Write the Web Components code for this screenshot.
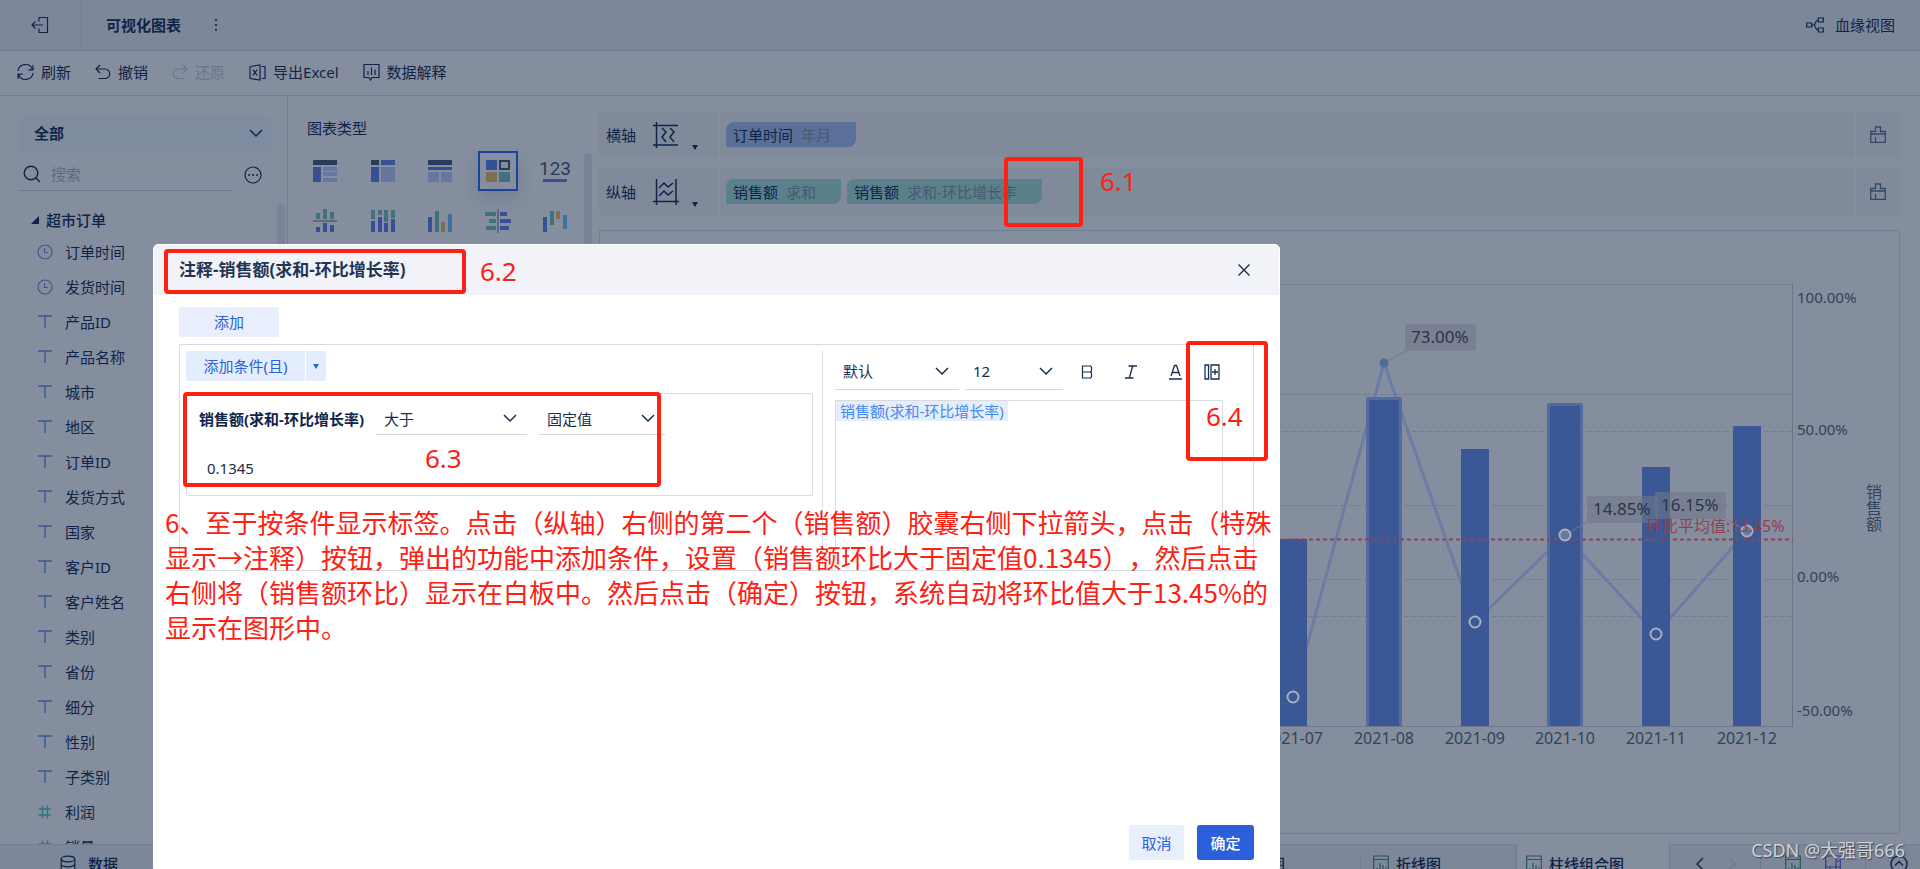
<!DOCTYPE html>
<html lang="zh-CN">
<head>
<meta charset="utf-8">
<title>可视化图表</title>
<style>
  :root {
    --page: #858e9e; --bar: #7d879a; --line: #747e91; --row: #808a9b;
    --ink: #0f2448; --muted: #5d6880; --blue: #374f94; --red: #fe2012;
    --sheet-line: #d9dbe3; --accent: #2b60da; --accent-soft: #e8eefb;
  }
  body {
    margin: 0; height: 100vh; overflow: hidden; background: var(--page); color: var(--ink);
    font: 15px/20px "Noto Sans", "Noto Sans CJK SC", sans-serif;
  }
</style>
</head>
<body>
<chart-workbench></chart-workbench>

<script>
const ICONS = {
  exit: [18, 18, '<path d="M8 5.500V1.500h8.500v15H8v-4M1 9h11M4.500 5.500L1 9l3.500 3.500"/>'],
  dots: [4, 14, '<g fill="currentColor" stroke="none"><circle cx="2" cy="2" r="1.100"/><circle cx="2" cy="7" r="1.100"/><circle cx="2" cy="12" r="1.100"/></g>'],
  lineage: [18, 16, '<path d="M.7 6h5v4h-5zM12.300 1h5v4h-5zM12.300 11h5v4h-5zM5.700 8h3M12.300 3C10 3 10 5 9 6.500S8.500 9 9.500 10.500 10.500 13 12.300 13"/>'],
  refresh: [17, 18, '<path d="M1 8A7.500 7.500 0 0 1 15.500 6.500M16 10A7.500 7.500 0 0 1 1.500 11.500M16 2v4.800h-4.600M1 16v-4.800h4.600"/>'],
  undo: [16, 16, '<path d="M5 1L1 5l4 4M1 5h9a4.700 4.700 0 0 1 0 9.500H3.500"/>'],
  redo: [16, 16, '<path d="M11 1l4 4-4 4M15 5H6a4.700 4.700 0 0 0 0 9.500h6.500"/>'],
  excel: [17, 17, '<path d="M1 2.500L11 1v15L1 14.500zM12.500 2.500H16v12h-3.500M3.800 5.500l4.400 6M8.200 5.500l-4.400 6"/>'],
  explain: [17, 18, '<path d="M1 1.500h15v13H9L7.500 17 6 14.500H1zM5 8v4M8.500 4.500V12M12 6.500V12"/>'],
  chevron: [14, 9, '<path d="M1 1l6 6 6-6"/>', 1.5],
  search: [18, 18, '<circle cx="8" cy="8" r="6.800"/><path d="M13 13l4 4"/>', 1.4],
  more: [18, 18, '<circle cx="9" cy="9" r="8"/><g fill="currentColor" stroke="none"><circle cx="5" cy="9" r="1"/><circle cx="9" cy="9" r="1"/><circle cx="13" cy="9" r="1"/></g>'],
  fold: [8, 8, '<path d="M8 0v8H0z" fill="currentColor" stroke="none"/>'],
  clock: [16, 16, '<circle cx="8" cy="8" r="7"/><path d="M7.500 4v4.500H11"/>'],
  text: [16, 16, '<path d="M1 2h14M8 2v12"/>', 1.4],
  number: [16, 16, '<path d="M2 5h12M1.500 11h12M5.500 1.500v13M10.500 1.500v13"/>', 1.4],
  database: [16, 18, '<ellipse cx="8" cy="4" rx="6.800" ry="2.800"/><path d="M1.200 4v10c0 3.700 13.600 3.700 13.600 0V4M1.200 9c0 3.700 13.600 3.700 13.600 0"/>'],
  xaxis: [26, 26, '<path d="M3.500 0v26M0 3.500h25M0 23h25M9 6l4 4-4 5 4 5M17 6l4 4-4 5 4 5"/>', 1.5],
  yaxis: [26, 26, '<path d="M3.500 0v26M23 0v26M0 22.500h26M6 9l5-5 4 4 5-4M6 17l5-5 4 4 5-4"/>', 1.5],
  caret: [6, 5, '<path d="M0 0h6L3 5z" fill="currentColor" stroke="none"/>'],
  brush: [16, 17, '<path d="M.7 5.500h4.800V1h5v4.500h4.800v10.800H.7zM.7 8h14.600M5.500 11v5"/>', 1.3],
  sheet: [16, 18, '<path d="M.7 1h14.600v16H.7zM.7 4.500h14.600M4 17v-4M7 17V8M10 17v-7M13 17v-5"/>', 1.2],
  board: [16, 18, '<path d="M.7 1h14.600v16H.7zM11 1v16M.7 12H15M5 12v5M11 6h4"/>', 1.2],
  left: [8, 14, '<path d="M7 1L1 7l6 6"/>', 1.4],
  right: [8, 14, '<path d="M1 1l6 6-6 6"/>', 1.4],
  up: [18, 18, '<circle cx="9" cy="9" r="8"/><path d="M5 10.500l4-4 4 4"/>', 1.4],
  close: [12, 12, '<path d="M.5.500l11 11M11.500.500l-11 11"/>', 1.4],
  bold: [12, 14, '<path d="M1.500 1h8L10.500 2v4L9.500 7H1.500zM1.500 7h8L10.500 8v4L9.500 13H1.500z"/>'],
  italic: [12, 14, '<path d="M3.500 1H12M0 13h8.500M7.700 1L4.300 13"/>', 1.3],
  color: [13, 16, '<path d="M2 12L5.500 1.500h2L11 12M3.200 8.500h6.600M0 15h13"/>', 1.3],
  insert: [16, 16, '<path d="M1 1h3.500v14H1zM7 1h8v14H7zM11 5v6M8 8h6"/>', 1.3]
};

function define(name, css, html, ready) {
  const template = document.createElement('template');
  template.innerHTML = `<style>:host{display:block;box-sizing:border-box}*,*::before{box-sizing:border-box}
    button,select,input{font:inherit;color:inherit;background:none;border:0;border-radius:0;margin:0;padding:0;outline:0;appearance:none}
    ul{list-style:none;margin:0;padding:0}a{color:inherit;text-decoration:none}${css}</style>${html}`;
  customElements.define(name, class extends HTMLElement {
    constructor() {
      super();
      this.attachShadow({ mode: 'open' }).append(template.content.cloneNode(true));
    }
    connectedCallback() { if (ready) ready(this, this.shadowRoot); }
  });
}

define('ui-icon', ':host{display:block;flex:none}svg{display:block}', '<svg fill="none" stroke="currentColor" aria-hidden="true"></svg>', (host, root) => {
  const [w, h, art, stroke = 1.2] = ICONS[host.getAttribute('name')];
  const svg = root.querySelector('svg');
  svg.setAttribute('width', w);
  svg.setAttribute('height', h);
  svg.setAttribute('stroke-width', stroke);
  svg.innerHTML = art;
});

define('ui-select', `
  :host{position:relative;display:flex;align-items:center;border-bottom:1px solid #d5d8df}
  select{width:100%;height:24px;padding-left:8px}
  ui-icon{position:absolute;right:10px;pointer-events:none}`,
  '<select><option></option></select><ui-icon name="chevron"></ui-icon>', (host, root) => {
    root.querySelector('select').setAttribute('aria-label', host.getAttribute('label'));
    root.querySelector('option').textContent = host.getAttribute('value');
  });

define('app-header', `
  :host{display:flex;align-items:center;height:51px;background:var(--bar);border-bottom:1px solid var(--line)}
  .exit{display:grid;place-items:center;width:81px;height:50px;border-right:1px solid #778196}
  h1{margin:0 33px 0 25px;font-size:15px;line-height:20px}
  .lineage{display:flex;align-items:center;gap:11px;margin-left:auto;margin-right:25px}`,
  `<button class="exit" aria-label="退出"><ui-icon name="exit"></ui-icon></button><h1>可视化图表</h1>
   <button aria-label="更多"><ui-icon name="dots"></ui-icon></button>
   <button class="lineage"><ui-icon name="lineage"></ui-icon>血缘视图</button>`);

define('app-toolbar', `
  :host{display:flex;align-items:center;gap:24px;height:45px;padding:0 17px 2px;border-bottom:1px solid var(--line)}
  button{display:flex;align-items:center;gap:7px}button:disabled{color:#6b758a}`,
  `<button><ui-icon name="refresh"></ui-icon>刷新</button><button><ui-icon name="undo"></ui-icon>撤销</button>
   <button disabled><ui-icon name="redo"></ui-icon>还原</button><button><ui-icon name="excel"></ui-icon>导出Excel</button>
   <button><ui-icon name="explain"></ui-icon>数据解释</button>`);

define('field-panel', `
  :host{position:relative;width:288px;border-right:1px solid var(--line);padding:20px 14px 0 19px;overflow:hidden}
  ui-select{height:36px;padding:0 4px 2px 7px;border:0;border-radius:8px;background:#7f8b9f;font-weight:700}
  .search{display:flex;align-items:center;justify-content:space-between;height:39px;margin-right:11px}
  .search button{padding-top:6px}
  label{display:flex;align-items:center;gap:10px;width:212px;height:39px;padding:6px 0 0 4px;border-bottom:1px solid #6b768b}
  input{width:150px}input::placeholder{color:#5f6b82;opacity:1}
  h2{display:flex;align-items:center;gap:7px;margin:19px 0 0 12px;font-size:15px;line-height:20px;font-weight:500}
  ul{margin:4px 0 0 18px}li{display:flex;align-items:center;gap:12px;height:35px;white-space:nowrap}
  .dimension{color:#3c5792}.measure{color:#2f7482}
  .bar{position:absolute;right:2px;top:108px;bottom:0;width:8px;border-radius:4px;background:#7a8497}
  ui-select{--chevron-right:14px}`,
  `<ui-select label="数据范围" value="全部"></ui-select>
   <div class="search"><label><ui-icon name="search"></ui-icon><input placeholder="搜索" aria-label="搜索"></label>
   <button aria-label="更多选项"><ui-icon name="more"></ui-icon></button></div>
   <h2><ui-icon name="fold"></ui-icon>超市订单</h2><ul></ul><div class="bar"></div>`, (host, root) => {
    const fields = '订单时间 发货时间 产品ID 产品名称 城市 地区 订单ID 发货方式 国家 客户ID 客户姓名 类别 省份 细分 性别 子类别 利润 销量'.split(' ');
    root.querySelector('ul').innerHTML = fields.map((f, i) => {
      const kind = i < 2 ? 'clock' : i < 16 ? 'text' : 'number';
      return `<li><ui-icon class="${i < 16 ? 'dimension' : 'measure'}" name="${kind}"></ui-icon>${f}</li>`;
    }).join('');
  });

const B = '#374f95', L = '#67769c', D = '#2a3c5c', G = '#42707d', O = '#7f6d51', S = '#3f729b';
const r = (x, y, w, h, c) => `<rect x="${x}" y="${y}" width="${w}" height="${h}" fill="${c}"/>`;
const CHARTS = [
  ['明细表', r(0,0,24,5,D)+r(0,7,8,15,B)+r(10,7,14,4,L)+r(10,12,14,4,L)+r(10,18,14,4,L)],
  ['交叉表', r(0,0,8,5,D)+r(10,0,14,5,B)+r(0,7,8,15,B)+r(10,7,14,15,L)],
  ['分组表', r(0,0,24,5,D)+r(0,7,24,3,B)+r(0,12,11,10,L)+r(13,12,11,10,L)],
  ['自定义', r(0,0,11,10,B)+`<rect x="14" y="1" width="9" height="8" fill="none" stroke="${D}" stroke-width="2"/>`+r(0,12,11,10,O)+r(13,12,11,10,G)],
  ['指标卡', `<text x="12" y="15" text-anchor="middle" font-family="Roboto" font-size="19" fill="${D}">123</text>`+r(0,19,24,3,B)],
  ['对比柱图', r(3,3,4,6,G)+r(10,-1,4,10,G)+r(17,2,4,7,G)+r(0,10,24,2,'#5c6980')+r(3,17,4,5,B)+r(10,13,4,9,B)+r(17,15,4,7,B)],
  ['堆积柱图', r(0,0,4,9,G)+r(7,0,4,5,G)+r(13,0,4,12,G)+r(20,0,4,8,G)+r(0,11,4,11,B)+r(7,7,4,15,B)+r(13,13,4,9,B)+r(20,9,4,13,B)],
  ['多系列柱图', r(0,7,4,15,B)+r(7,1,4,21,G)+r(13,12,4,10,O)+r(20,4,4,18,S)],
  ['对比条图', r(-1,2,11,4,G)+r(3,9,7,4,G)+r(0,16,10,4,G)+r(11,-1,2,24,'#5c6980')+r(14,2,7,4,B)+r(14,9,11,4,B)+r(14,16,9,4,B)],
  ['瀑布图', r(0,7,4,15,B)+r(7,1,4,14,G)+r(13,1,4,8,O)+r(20,5,4,14,S)]
];

define('chart-gallery', `
  :host{position:relative;width:311px;padding:22px 24px 0 17px;overflow:hidden}
  h2{margin:0 2px 13px;font-size:15px;line-height:20px;font-weight:400}
  .grid{display:grid;grid-template-columns:repeat(5,40px);justify-content:space-between;gap:10px 0}
  button{display:grid;place-items:center;height:40px;border:2px solid transparent}
  button[aria-pressed=true]{border-color:#1b439b;box-shadow:0 8px 16px rgba(20,40,80,.14)}
  svg{display:block;overflow:visible}
  .bar{position:absolute;left:296px;top:57px;bottom:0;width:8px;border-radius:4px;background:#7a8497}`,
  '<h2>图表类型</h2><div class="grid"></div><div class="bar"></div>', (host, root) => {
    root.querySelector('.grid').innerHTML = CHARTS.map(([name, art], i) =>
      `<button aria-label="${name}" aria-pressed="${i === 3}"><svg width="24" height="22">${art}</svg></button>`).join('');
  });

define('axis-shelf', `
  :host{display:flex;height:47px;background:var(--row)}
  .label{display:flex;align-items:center;width:121px;padding-left:7px;border-right:2px solid #858f9f}
  .label ui-icon[name$=axis]{margin-left:17px}
  .label ui-icon[name=caret]{margin:26px 0 0 13px}
  .chips{display:flex;flex:1;align-items:center;gap:6px;padding:0 6px}
  .clear{display:grid;place-items:center;width:46px;border-left:2px solid #858f9f;color:#354764}`,
  `<button class="label"><slot name="label"></slot></button><div class="chips"><slot></slot></div>
   <button class="clear" aria-label="清空"><ui-icon name="brush"></ui-icon></button>`, (host, root) => {
    const label = root.querySelector('.label');
    if (!label.querySelector('ui-icon')) {
      label.insertAdjacentHTML('beforeend', `<ui-icon name="${host.getAttribute('axis')}axis"></ui-icon><ui-icon name="caret"></ui-icon>`);
    }
  });

define('field-chip', `
  :host{display:flex;align-items:center;gap:8px;height:25px;padding:0 25px 0 7px;border-radius:8px 0;background:#5a808c;white-space:nowrap}
  :host([kind=time]){background:#5a7098}::slotted(small){font-size:15px;color:#485872}`,
  '<slot></slot>');

define('combo-chart', `
  :host{flex:1;min-height:0;border:1px solid var(--line);overflow:hidden}
  svg{display:block;width:100%;height:100%}
  text{font-family:"Noto Sans","Noto Sans CJK SC",sans-serif;fill:#33425c}
  .axis{font-size:15px}.month{font-size:16px;text-anchor:middle}.tip{font-size:17px;fill:#29354c}
  .title{font-size:16px;writing-mode:vertical-rl}.average{font-size:16px;fill:#933f50}`,
  '<svg viewBox="600 231 1299 602" preserveAspectRatio="xMaxYMin meet" role="img" aria-label="销售额与环比增长率"></svg>', (host, root) => {
    const points = [[1202, 655], [1293, 697], [1384, 363], [1475, 622], [1565, 535], [1656, 634], [1747, 531]];
    const bars = [[1293, 539], [1384, 400, 1], [1475, 449], [1565, 406, 1], [1656, 467], [1747, 426]];
    let s = '';
    for (const y of [284, 394, 431, 505, 579, 616]) s += `<path d="M700 ${y}.5H1792" stroke="#737d90" stroke-dasharray="5 3" fill="none"/>`;
    s += `<path d="M${points.map(p => p.join(' ')).join('L')}" fill="none" stroke="#6c7ca4" stroke-width="3"/>`;
    for (const [x, y, glow] of bars) {
      if (glow) s += `<rect x="${x - 18}" y="${y - 3}" width="36" height="${730 - y}" rx="2" fill="#536ba1"/>`;
      s += `<rect x="${x - (glow ? 15 : 14)}" y="${y}" width="${glow ? 30 : 28}" height="${727 - y}" fill="#3b5896"/>`;
    }
    s += '<path d="M700 726.500H1792" stroke="#6d788c"/><path d="M1792.500 284V727" stroke="#6a7488"/>';
    s += '<path d="M1384 363L1406 351M1565 535L1587 522M1747 531L1726 519" stroke="#707a8d"/>';
    s += '<path d="M700 539.500H1793" stroke="#8c4559" stroke-width="2" stroke-dasharray="4 3"/>';
    points.slice(1).forEach(([x, y], i) => {
      s += i === 1 ? `<circle cx="${x}" cy="${y}" r="4.500" fill="#536a98"/>`
        : `<circle cx="${x}" cy="${y}" r="5.500" fill="${i === 3 || i === 5 ? '#667a9f' : '#3b5896'}" stroke="#a9afbb" stroke-width="2"/>`;
    });
    for (const [x, y, t] of [[1405, 324, '73.00%'], [1587, 496, '14.85%'], [1655, 492, '16.15%']]) {
      s += `<rect x="${x}" y="${y}" width="71" height="27" rx="2" fill="#707788" fill-opacity=".6"/><text class="tip" x="${x + 6}" y="${y + 19}">${t}</text>`;
    }
    s += '<text class="average" x="1646" y="532">环比平均值:13.45%</text>';
    for (const [y, t] of [[303, '100.00%'], [435, '50.00%'], [582, '0.00%'], [716, '-50.00%']]) s += `<text class="axis" x="1797" y="${y}">${t}</text>`;
    bars.forEach(([x], i) => { s += `<text class="month" x="${x}" y="744">2021-${String(i + 7).padStart(2, '0')}</text>`; });
    s += '<text class="title" x="1873" y="484">销售额</text>';
    root.querySelector('svg').innerHTML = s;
  });

define('sheet-tabs', `
  :host{height:25px;overflow:hidden;background:var(--bar);box-shadow:inset 0 1px var(--line)}
  nav{display:flex;height:40px}
  a,.tools{display:flex;align-items:center;gap:7px;font-weight:500;white-space:nowrap}
  .data{width:288px;padding-left:60px;gap:12px}
  .prev{flex:1;justify-content:flex-end;padding-right:75px;margin:10px 0;border-right:1px solid #717c90;height:20px}
  .line{width:156px;padding-left:12px;border-right:1px solid #6f7a90}
  .now{width:152px;padding-left:9px;background:var(--page)}
  .tools{width:251px;border-left:1px solid #6f7a90;padding-left:26px;gap:24px}
  .g{color:#24575f}.sep{width:1px;height:20px;background:#707a8f}.off{color:#6f7990}.b{color:#343c86}`,
  `<nav><a class="data" href="#data"><ui-icon name="database"></ui-icon>数据</a>
   <a class="prev" href="#column">柱形图</a>
   <a class="line" href="#line"><ui-icon class="g" name="sheet"></ui-icon>折线图</a>
   <a class="now" href="#combo"><ui-icon class="g" name="sheet"></ui-icon>柱线组合图</a>
   <div class="tools"><ui-icon name="left"></ui-icon><ui-icon class="off" name="right"></ui-icon><span class="sep"></span>
   <ui-icon class="g" name="sheet"></ui-icon><ui-icon class="b" name="board"></ui-icon><span class="sep"></span><ui-icon name="up"></ui-icon></div></nav>`);

define('note-dialog', `
  :host{position:absolute;left:153px;right:640px;top:244px;bottom:0;display:flex;flex-direction:column;
    background:#fff;border:1px solid #fff;border-radius:5px 5px 0 0;color:#1b2d4d;overflow:hidden}
  header{display:flex;align-items:center;justify-content:space-between;height:50px;padding:0 29px 0 25px;background:#f2f3f8}
  h2{margin:0;font-size:17px;line-height:24px;color:#223553}
  main{flex:1;padding:12px 25px 0}
  .add{display:block;width:100px;height:30px;border-radius:2px;background:var(--accent-soft);color:var(--accent)}
  .box{display:flex;height:227px;margin-top:7px;border:1px solid var(--sheet-line);border-radius:2px}
  .conds{flex:1;padding:6px 9px 0 6px}
  .split{display:flex;gap:1px;color:var(--accent)}
  .split button{height:30px;width:119px;background:#e4edfd;border-radius:2px 0 0 2px}
  .split button + button{display:grid;place-items:center;width:20px;border-radius:0 2px 2px 0}
  .cond{height:103px;margin-top:12px;padding:11px 12px;border:1px solid var(--sheet-line);border-radius:2px}
  .line{display:flex;align-items:center;height:30px;gap:12px}
  .line b{color:var(--ink);white-space:nowrap;padding-bottom:2px}
  .line ui-select{height:30px;width:151px;padding-bottom:2px}.line ui-select + ui-select{width:126px}
  input{display:block;width:150px;height:30px;margin:18px 0 0 8px}
  .editor{width:431px;margin-top:6px;padding:8px 30px 0 12px;border-left:1px solid var(--sheet-line);display:flex;flex-direction:column;overflow:hidden}
  .tools{display:flex;align-items:center;height:31px;gap:6px}
  .tools ui-select{height:31px;width:124px;padding-bottom:6px}.tools ui-select + ui-select{width:98px}
  .marks{display:flex;flex:1;align-items:center;gap:22px;padding:0 0 6px 12px}
  .marks button:nth-child(-n+2){margin-right:10px}
  .text{flex:1;margin-top:10px;border:1px solid var(--sheet-line);border-bottom:0}
  .text span{display:inline-block;padding:0 4px 0 4px;background:#e6edfa;color:#4189f4}
  footer{display:flex;justify-content:flex-end;gap:13px;padding:0 25px 8px}
  footer button{width:55px;height:35px;border-radius:3px;background:var(--accent-soft);color:var(--accent)}
  footer button + button{width:57px;background:var(--accent);color:#fff;font-weight:500}`,
  `<header><h2>注释-销售额(求和-环比增长率)</h2><button aria-label="关闭"><ui-icon name="close"></ui-icon></button></header>
   <main><button class="add">添加</button>
   <div class="box"><section class="conds"><div class="split"><button>添加条件(且)</button><button aria-label="条件类型"><ui-icon name="caret"></ui-icon></button></div>
   <div class="cond"><div class="line"><b>销售额(求和-环比增长率)</b><ui-select label="比较方式" value="大于"></ui-select><ui-select label="值类型" value="固定值"></ui-select></div>
   <input value="0.1345" aria-label="固定值"></div></section>
   <section class="editor"><div class="tools"><ui-select label="字体" value="默认"></ui-select><ui-select label="字号" value="12"></ui-select>
   <div class="marks"><button aria-label="加粗"><ui-icon name="bold"></ui-icon></button><button aria-label="斜体"><ui-icon name="italic"></ui-icon></button>
   <button aria-label="文字颜色"><ui-icon name="color"></ui-icon></button><button aria-label="插入字段"><ui-icon name="insert"></ui-icon></button></div></div>
   <div class="text" role="textbox" aria-label="注释内容" contenteditable="true" spellcheck="false"><span>销售额(求和-环比增长率)</span></div></section></div></main>
   <footer><button>取消</button><button>确定</button></footer>`);

define('guide-marks', `
  :host{position:absolute;inset:0;overflow:hidden;pointer-events:none;color:var(--red);font-size:26px;line-height:35px}
  i,b,p,small{position:absolute;margin:0;white-space:nowrap;font-weight:400}
  i{border:4px solid var(--red);border-radius:4px}
  p{left:165px;top:504px;font-family:"Noto Sans CJK SC",sans-serif;text-spacing-trim:space-all}
  small{right:15px;bottom:7px;font-size:18px;line-height:24px;color:#ced1d7;text-shadow:1px 1px 1px #3f4858}`,
  `<i style="left:1004px;top:157px;width:79px;height:70px"></i><b style="left:1100px;top:164px">6.1</b>
   <i style="left:164px;top:249px;width:302px;height:45px"></i><b style="left:480px;top:254px">6.2</b>
   <i style="left:183px;top:392px;width:478px;height:95px"></i><b style="left:425px;top:441px">6.3</b>
   <i style="left:1186px;top:341px;width:82px;height:120px"></i><b style="left:1206px;top:399px">6.4</b>
   <p>6、至于按条件显示标签。点击（纵轴）右侧的第二个（销售额）胶囊右侧下拉箭头，点击（特殊<br>显示→注释）按钮，弹出的功能中添加条件，设置（销售额环比大于固定值0.1345），然后点击<br>右侧将（销售额环比）显示在白板中。然后点击（确定）按钮，系统自动将环比值大于13.45%的<br>显示在图形中。</p>
   <small>CSDN @大强哥666</small>`);

define('chart-workbench', `
  :host{position:relative;display:flex;flex-direction:column;height:100%;overflow:hidden}
  .work{display:flex;flex:1;min-height:0}
  field-panel,chart-gallery{flex:none}
  .canvas{display:flex;flex:1;flex-direction:column;min-width:0;padding:15px 20px 10px 0}
  axis-shelf + axis-shelf{margin:10px 0 15px}`,
  `<app-header></app-header><app-toolbar></app-toolbar>
   <div class="work"><field-panel></field-panel><chart-gallery></chart-gallery>
   <div class="canvas">
     <axis-shelf axis="x"><span slot="label">横轴</span><field-chip kind="time">订单时间<small>年月</small></field-chip></axis-shelf>
     <axis-shelf axis="y"><span slot="label">纵轴</span><field-chip>销售额<small>求和</small></field-chip><field-chip>销售额<small>求和-环比增长率</small></field-chip></axis-shelf>
     <combo-chart></combo-chart>
   </div></div>
   <sheet-tabs></sheet-tabs><note-dialog></note-dialog><guide-marks></guide-marks>`);
</script>
</body>
</html>
